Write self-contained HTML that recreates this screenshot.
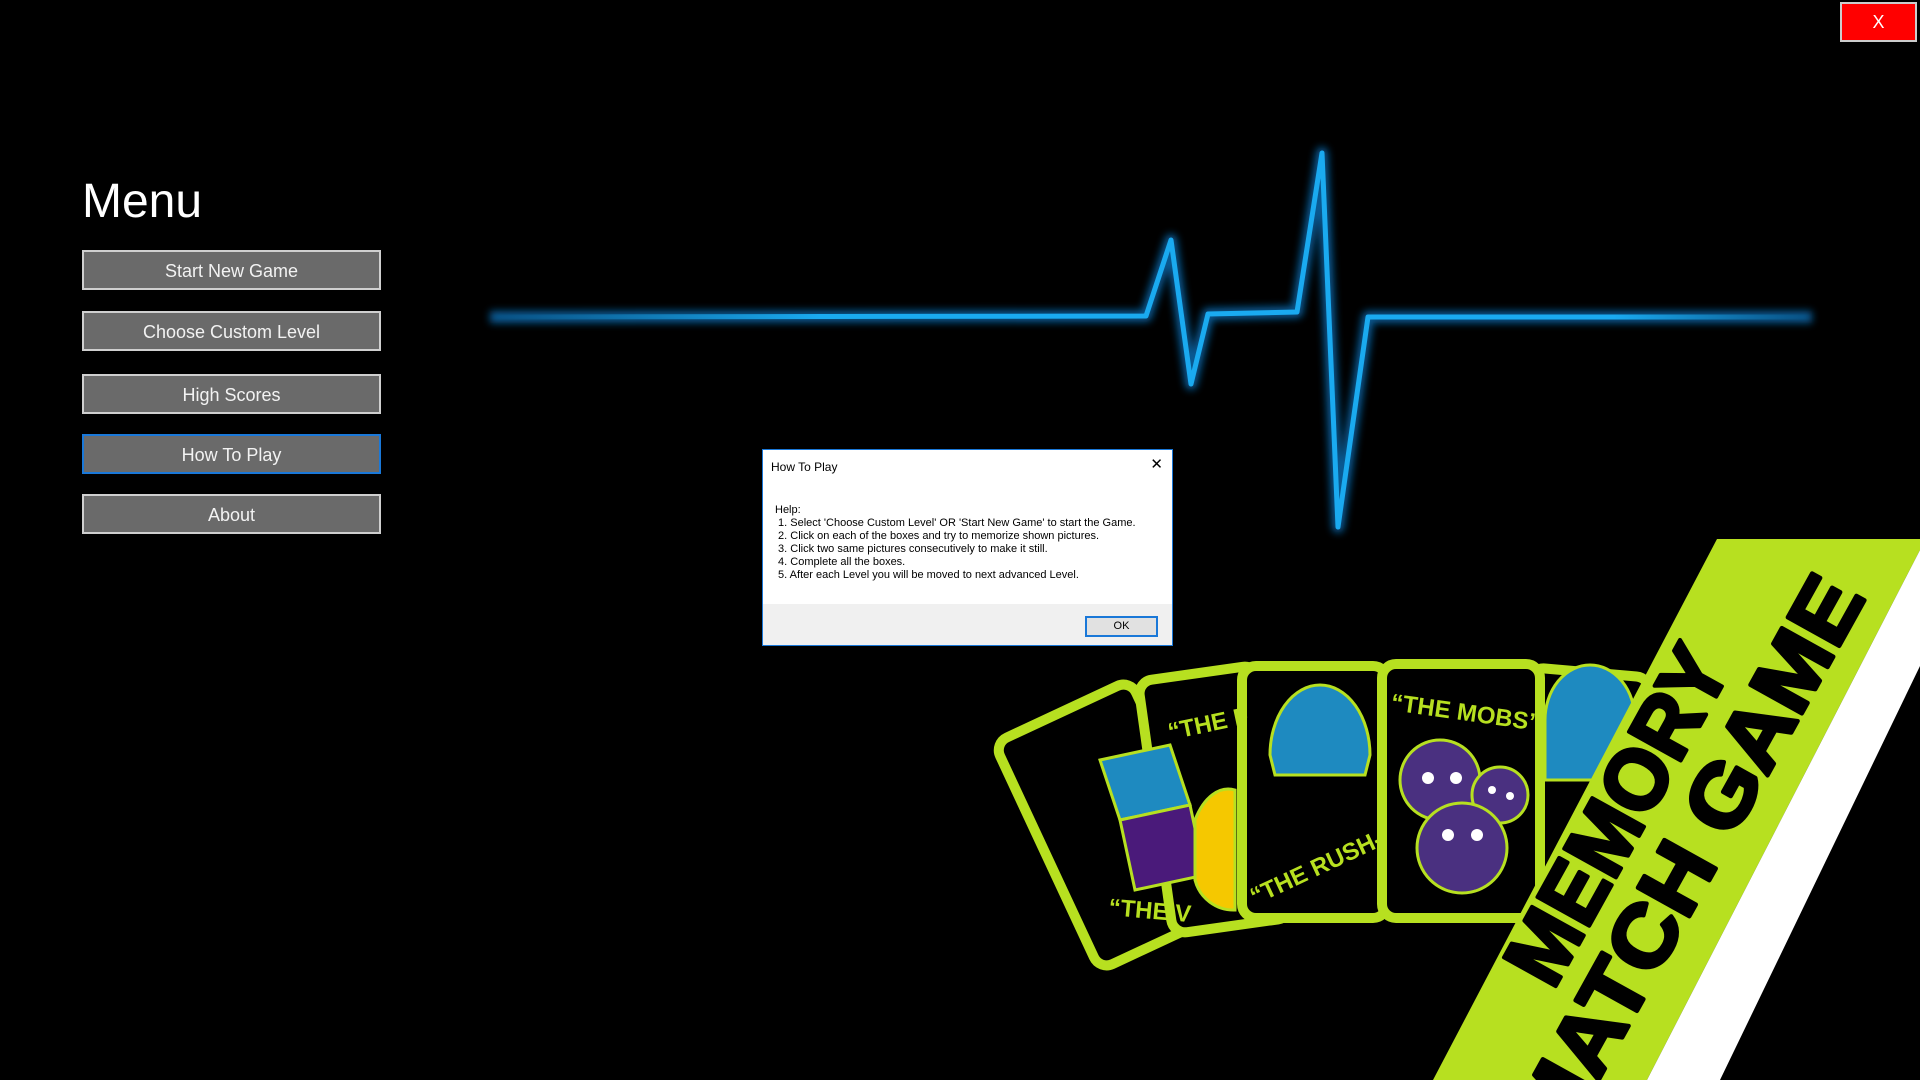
<!DOCTYPE html>
<html><head><meta charset="utf-8"><style>
html{overflow:hidden}
body{margin:0;width:1920px;height:1080px;background:#000;overflow:hidden;position:relative;font-family:"Liberation Sans",sans-serif}
.menu{position:absolute;left:82px;top:174px;color:#fff;font-size:48px}
.btn{position:absolute;left:82px;width:295px;height:36px;background:#6a6a6a;border:2px solid #cfcfcf;color:#f2f2f2;font-size:18px;text-align:center;line-height:38px}
.btn.f{border-color:#1a78d8}
.x{position:absolute;left:1840px;top:2px;width:73px;height:36px;background:#f00;border:2px solid #ccc;color:#fff;text-align:center;line-height:36px;font-size:18px}
.dlg{position:absolute;left:762px;top:449px;width:409px;height:195px;background:#fff;border:1px solid #1a78d8;font-size:11px;color:#000}
.dlg .t{position:absolute;left:8px;top:10px;font-size:12px}
.dlg .c{position:absolute;right:9px;top:5px;font-size:15px;font-weight:normal}
.dlg .b{position:absolute;left:12px;top:54px;line-height:13px;white-space:pre}
.dlg .ft{position:absolute;left:0;top:154px;width:409px;height:41px;background:#f0f0f0}
.ok{position:absolute;left:322px;top:12px;width:69px;height:17px;border:2px solid #1a78d8;background:#e1e1e1;text-align:center;line-height:17px;font-size:11px;box-sizing:content-box}
svg{overflow:hidden}
</style></head><body>
<svg width="1920" height="1080" style="position:absolute;left:0;top:0">
<defs>
<linearGradient id="lg" x1="0" x2="1"><stop offset="0" stop-color="#1aaaf0" stop-opacity="0"/><stop offset=".25" stop-color="#1aaaf0"/><stop offset=".85" stop-color="#1aaaf0"/><stop offset="1" stop-color="#1aaaf0" stop-opacity="0"/></linearGradient>
<filter id="gl"><feGaussianBlur stdDeviation="4"/></filter>
</defs>
<g fill="none" stroke-linejoin="round">
<polyline points="490,317 1146,316 1171,240 1191,384 1208,314 1297,312 1322,153 1338,527 1368,317 1812,317" stroke="#0a7fd0" stroke-width="12" filter="url(#gl)" opacity=".7"/>
<polyline points="490,317 1146,316 1171,240 1191,384 1208,314 1297,312 1322,153 1338,527 1368,317 1812,317" stroke="url(#lg)" stroke-width="5"/>
</g>
<g stroke="#b7e020" stroke-width="10">
<rect x="1040" y="700" width="150" height="250" rx="14" fill="#000" transform="rotate(-25 1115 825)"/>
<rect x="1155" y="672" width="120" height="255" rx="14" fill="#000" transform="rotate(-8 1215 800)"/>
<rect x="1520" y="672" width="120" height="245" rx="14" fill="#000" transform="rotate(5 1580 795)"/>
<rect x="1242" y="666" width="145" height="252" rx="14" fill="#000"/>
<rect x="1382" y="664" width="158" height="254" rx="14" fill="#000"/>
</g>
<g stroke="#b7e020" stroke-width="3">
<path d="M1270,755 a50,70 0 0 1 100,0 l-5,20 h-90z" fill="#1e8ac0"/>
<path d="M1100,760 l70,-15 l20,60 l-70,15z" fill="#1e8ac0" />
<path d="M1120,820 l70,-15 l15,70 l-70,15z" fill="#4a1a7a"/>
<path d="M1195,820 a40,70 0 0 1 40,-30 v120 a40,40 0 0 1 -40,-30z" fill="#f5c800"/>
<path d="M1545,720 a45,55 0 0 1 90,0 v60 h-90z" fill="#1e8ac0"/>
<circle cx="1440" cy="780" r="40" fill="#4a3080"/>
<circle cx="1500" cy="795" r="28" fill="#4a3080"/>
<circle cx="1462" cy="848" r="45" fill="#4a3080"/>
</g>
<g fill="#fff"><circle cx="1428" cy="778" r="6"/><circle cx="1456" cy="778" r="6"/><circle cx="1492" cy="790" r="4"/><circle cx="1510" cy="796" r="4"/><circle cx="1448" cy="835" r="6"/><circle cx="1477" cy="835" r="6"/></g>
<g font-family="Liberation Sans" font-weight="bold" fill="#b7e020" font-size="24">
<text transform="translate(1390,710) rotate(8)">“THE MOBS”</text>
<text transform="translate(1255,905) rotate(-25)">“THE RUSH-</text>
<text transform="translate(1170,740) rotate(-12)">“THE F</text>
<text transform="translate(1108,915) rotate(5)">“THE V</text>
</g>
<polygon points="1717,539 1920,539 1920,550 1647,1080 1433,1080" fill="#b7e020"/>
<polygon points="1920,550 1920,666 1720,1080 1647,1080" fill="#fff"/>
<g font-family="Liberation Sans" font-weight="bold" font-size="86" fill="#000" stroke="#000" stroke-width="4" stroke-linejoin="round">
<text transform="translate(1553,991) rotate(-61)" textLength="370" lengthAdjust="spacingAndGlyphs">MEMORY</text>
<text transform="translate(1560,1150) rotate(-61)" textLength="632" lengthAdjust="spacingAndGlyphs">MATCH GAME</text>
</g>
</svg>
<div class="menu">Menu</div>
<div class="btn" style="top:250px">Start New Game</div>
<div class="btn" style="top:311px">Choose Custom Level</div>
<div class="btn" style="top:374px">High Scores</div>
<div class="btn f" style="top:434px">How To Play</div>
<div class="btn" style="top:494px">About</div>
<div class="x">X</div>
<div class="dlg"><div class="t">How To Play</div><div class="c">✕</div>
<div class="b">Help:
 1. Select 'Choose Custom Level' OR 'Start New Game' to start the Game.
 2. Click on each of the boxes and try to memorize shown pictures.
 3. Click two same pictures consecutively to make it still.
 4. Complete all the boxes.
 5. After each Level you will be moved to next advanced Level.</div>
<div class="ft"><div class="ok">OK</div></div></div>
</body></html>
